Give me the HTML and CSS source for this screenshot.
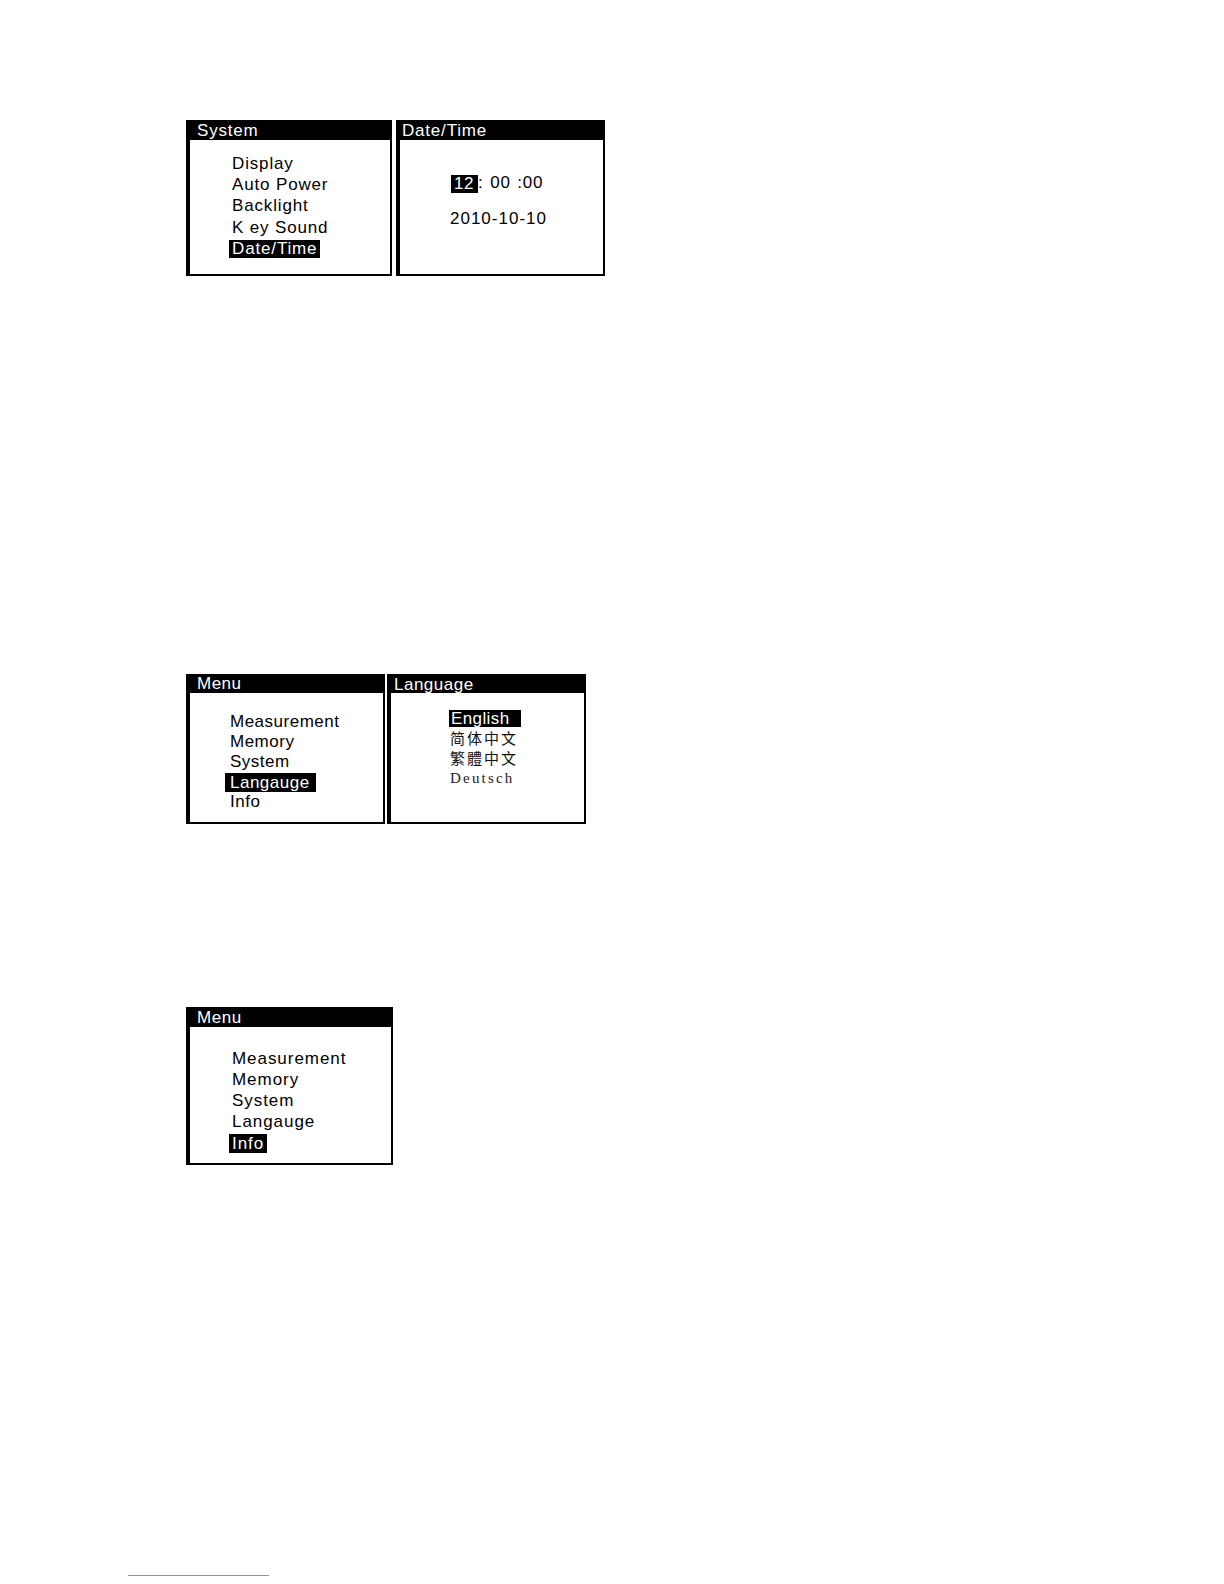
FILE: index.html
```html
<!DOCTYPE html>
<html lang="en">
<head>
<meta charset="utf-8">
<title>Menu screens</title>
<link rel="stylesheet" href="styles.css">
</head>
<body>
<main class="screens">
  <section class="row row-system">
    <div class="panel panel-system">
      <div class="hdr">System</div>
      <ul class="items">
        <li>Display</li>
        <li>Auto Power</li>
        <li>Backlight</li>
        <li>K ey Sound</li>
        <li><span class="sel">Date/Time</span></li>
      </ul>
    </div>
    <div class="panel panel-date">
      <div class="hdr">Date/Time</div>
      <div class="clock">
        <div class="time"><span class="sel">12</span>: 00 :00</div>
        <div class="date">2010-10-10</div>
      </div>
    </div>
  </section>

  <section class="row row-lang">
    <div class="panel panel-menu-small">
      <div class="hdr">Menu</div>
      <ul class="items">
        <li>Measurement</li>
        <li>Memory</li>
        <li>System</li>
        <li><span class="sel">Langauge</span></li>
        <li>Info</li>
      </ul>
    </div>
    <div class="panel panel-language">
      <div class="hdr">Language</div>
      <ul class="langs">
        <li><span class="sel">English</span></li>
        <li class="cjk" lang="zh-CN">简体中文</li>
        <li class="cjk" lang="zh-TW">繁體中文</li>
        <li class="de">Deutsch</li>
      </ul>
    </div>
  </section>

  <section class="row row-info">
    <div class="panel panel-menu">
      <div class="hdr">Menu</div>
      <ul class="items">
        <li>Measurement</li>
        <li>Memory</li>
        <li>System</li>
        <li>Langauge</li>
        <li><span class="sel">Info</span></li>
      </ul>
    </div>
  </section>
</main>
<div class="footnote-rule"></div>
</body>
</html>
```

FILE: styles.css
```css
html, body {
  margin: 0;
  padding: 0;
  background: #fff;
}

body {
  width: 1224px;
  min-height: 1584px;
  font-family: "Liberation Sans", Arial, sans-serif;
  color: #000;
}

.screens {
  padding-left: 186px;
  padding-top: 120px;
}

.row {
  display: flex;
  align-items: flex-start;
}

.row-system { gap: 4px; }
.row-lang { margin-top: 398px; gap: 2px; }
.row-info { margin-top: 183px; }

.panel {
  box-sizing: border-box;
  border-left: 4px solid #000;
  border-right: 2px solid #000;
  border-top: 1px solid #000;
  border-bottom: 2px solid #000;
  background: #fff;
  display: flex;
  flex-direction: column;
}

.hdr {
  background: #000;
  color: #fff;
  font-size: 17px;
  letter-spacing: 0.8px;
  height: 19px;
  line-height: 20px;
  padding-left: 7px;
  white-space: nowrap;
  overflow: hidden;
}

.items, .langs {
  list-style: none;
  margin: 0;
  padding: 0;
}

.items li {
  font-size: 17px;
  letter-spacing: 0.85px;
  height: 21.2px;
  line-height: 21.2px;
  white-space: nowrap;
}

.sel {
  display: inline-block;
  background: #000;
  color: #fff;
  line-height: 18px;
  padding: 0 3px;
  margin-left: -3px;
  vertical-align: middle;
}

/* Row 1 */
.panel-system {
  width: 206px;
  height: 156px;
}
.panel-system .items {
  padding: 13px 0 0 42px;
}

.panel-date {
  width: 209px;
  height: 156px;
}
.panel-date .hdr {
  padding-left: 2px;
}
.clock {
  padding: 32px 0 0 50px;
  font-size: 17px;
  letter-spacing: 0.8px;
}
.clock .time {
  height: 21px;
  line-height: 21px;
  white-space: nowrap;
  word-spacing: 1px;
}
.clock .time .sel {
  padding: 0 4px 0 3px;
  margin-left: 1px;
  letter-spacing: 0.6px;
}
.clock .date {
  margin-top: 15px;
  height: 21px;
  line-height: 21px;
  letter-spacing: 1px;
}

/* Row 2 */
.panel-menu-small {
  width: 199px;
  height: 150px;
}
.panel-menu-small .hdr {
  height: 18px;
  line-height: 18px;
  padding-left: 7px;
  letter-spacing: 0.5px;
}
.panel-menu-small .items {
  padding: 19px 0 0 40px;
}
.panel-menu-small .items li {
  height: 20px;
  line-height: 20px;
  letter-spacing: 0.5px;
}
.panel-menu-small .sel {
  padding: 0 6px 0 5px;
  margin-left: -5px;
  line-height: 19px;
}

.panel-language {
  width: 199px;
  height: 150px;
}
.panel-language .hdr {
  height: 18px;
  line-height: 20px;
  padding-left: 3px;
  letter-spacing: 0.5px;
}
.langs {
  padding: 15px 0 0 58px;
}
.langs li {
  height: 20px;
  line-height: 20px;
  font-size: 17px;
  letter-spacing: 0.4px;
  white-space: nowrap;
}
.langs .sel {
  padding: 0 11px 0 2px;
  margin-left: 0;
  line-height: 17px;
}
.langs .cjk {
  font-family: "Noto Sans CJK SC", "Noto Sans CJK TC", sans-serif;
  font-size: 15px;
  font-weight: 400;
  letter-spacing: 2px;
  color: #111;
  padding-left: 1px;
}
.langs .cjk:lang(zh-TW) {
  font-family: "Noto Sans CJK TC", "Noto Sans CJK SC", sans-serif;
}
.langs .de {
  font-family: "Liberation Serif", "Times New Roman", serif;
  font-size: 15px;
  letter-spacing: 2.2px;
  color: #222;
  padding-left: 1px;
}

/* Row 3 */
.panel-menu {
  width: 207px;
  height: 158px;
}
.panel-menu .items {
  padding: 21px 0 0 42px;
}
.panel-menu .items li {
  letter-spacing: 0.95px;
  height: 21px;
  line-height: 21px;
}
.panel-menu .hdr {
  letter-spacing: 0.6px;
}
.panel-menu .sel {
  line-height: 19px;
}

.footnote-rule {
  margin: 410px 0 0 128px;
  width: 141px;
  height: 1px;
  background: #8a90b4;
}
```
